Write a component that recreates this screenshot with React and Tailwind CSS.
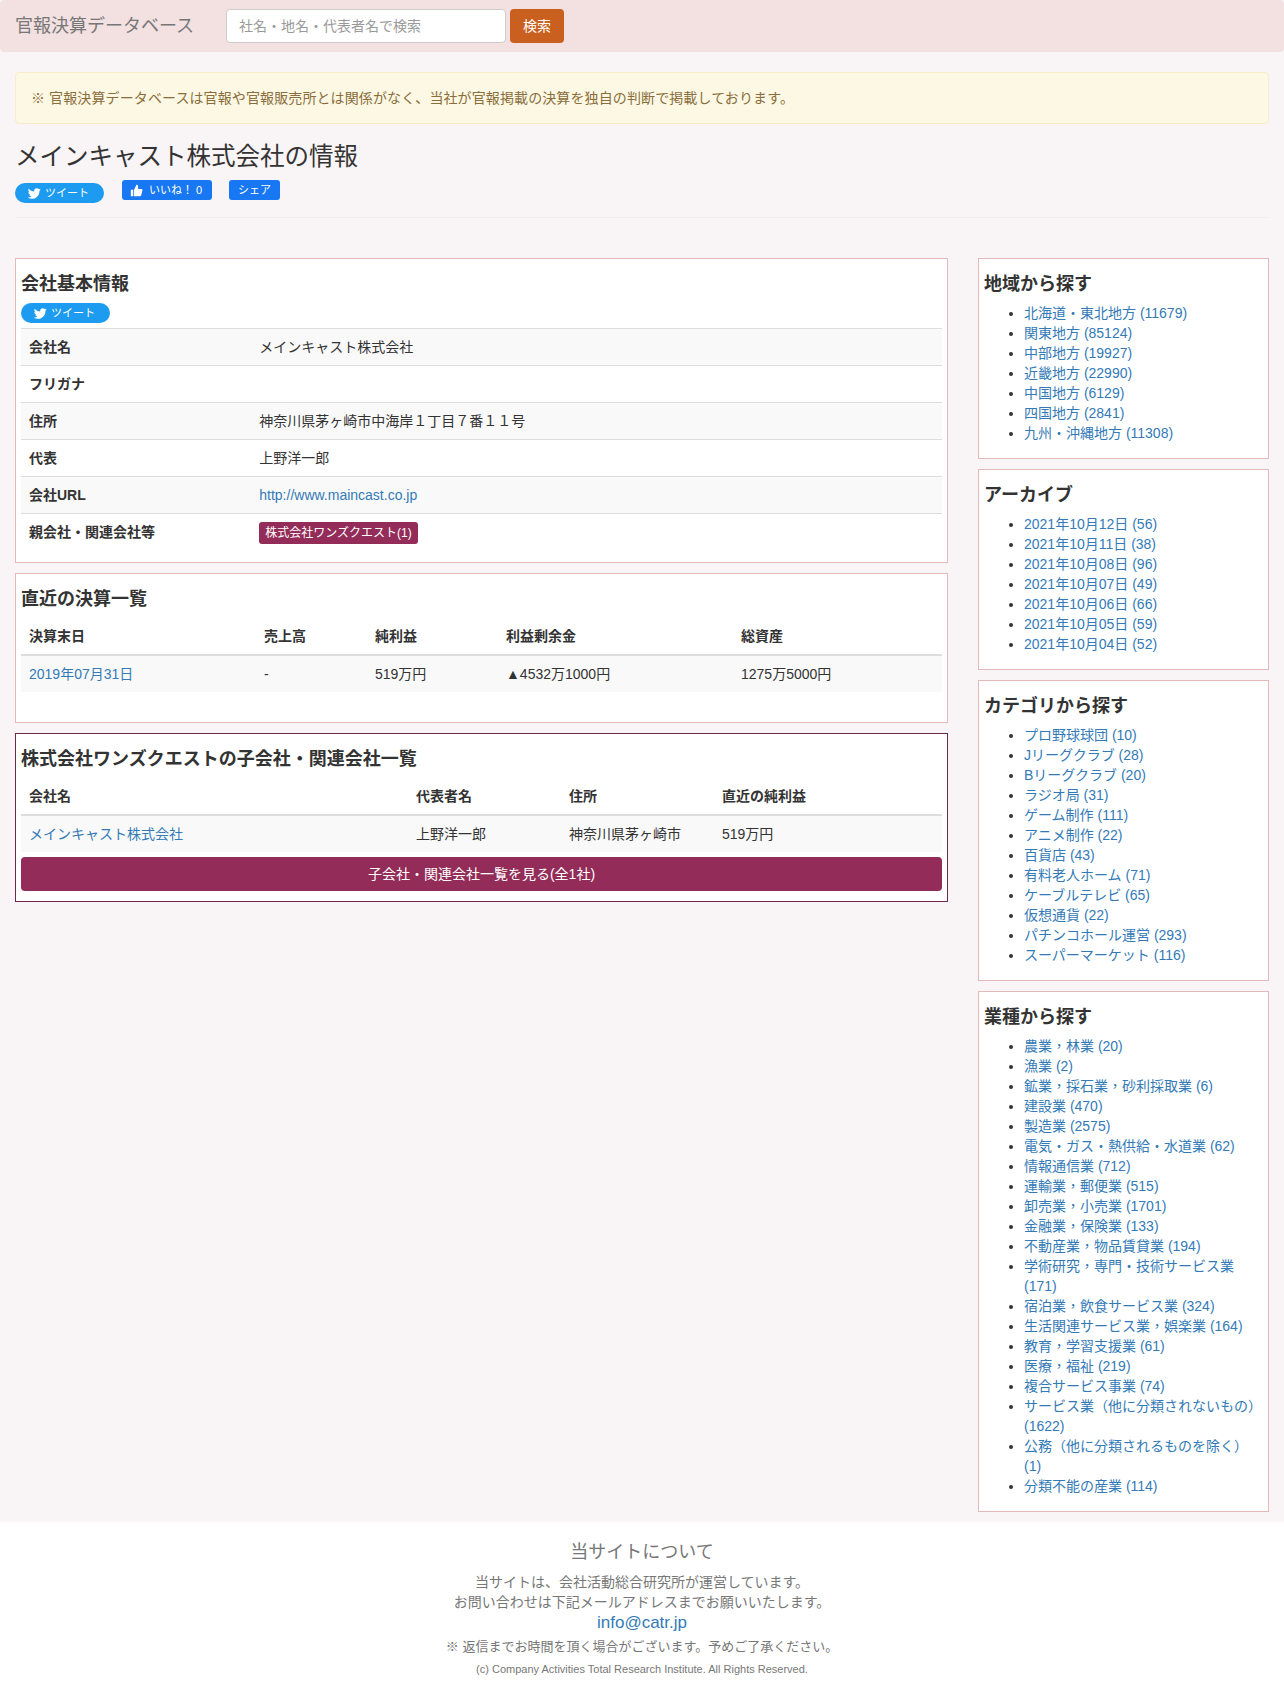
import React from "react";

const Tw = ({ className = "" }) => (
  <a className={`flex items-center h-5 w-[89px] rounded-[10px] bg-[#1d9bf0] text-white text-[11px] leading-5 pl-[13px] ${className}`}>
    <svg viewBox="0 0 24 24" className="w-[13px] h-[13px] mr-[4px] fill-white"><path d="M23.6 4.6c-.9.4-1.8.7-2.8.8 1-.6 1.8-1.6 2.1-2.7-.9.6-2 1-3.1 1.2C18.9 2.9 17.6 2.3 16.2 2.3c-2.7 0-4.9 2.2-4.9 4.9 0 .4 0 .8.1 1.1C7.3 8.1 3.7 6.1 1.3 3.1.9 3.8.6 4.7.6 5.6c0 1.7.9 3.2 2.2 4.1-.8 0-1.6-.2-2.2-.6v.1c0 2.4 1.7 4.4 3.9 4.8-.4.1-.8.2-1.3.2-.3 0-.6 0-.9-.1.6 2 2.4 3.4 4.6 3.4-1.7 1.3-3.8 2.1-6.1 2.1-.4 0-.8 0-1.2-.1 2.2 1.4 4.8 2.2 7.5 2.2 9.1 0 14-7.5 14-14v-.6c1-.7 1.8-1.6 2.5-2.5z" /></svg>
    ツイート
  </a>
);

const Heading = ({ children }) => (
  <h4 className="text-[18px] leading-[20px] font-bold text-[#333] mt-[10px] mb-[9px]">{children}</h4>
);

const Panel = ({ title, border = "border-[#e4b9b9]", children }) => (
  <div className={`border ${border} bg-white p-[5px] mb-[10px]`}>
    <Heading>{title}</Heading>
    {children}
  </div>
);

// The full-width comma sits centred in the reference, as in the TC face.
const Label = ({ text }) =>
  text.split("，").map((part, i) => (
    <React.Fragment key={i}>
      {i > 0 && <span className="leading-[0px] font-['Noto_Sans_CJK_TC',sans-serif]">，</span>}
      {part}
    </React.Fragment>
  ));

const Side = ({ title, items }) => (
  <div className="border border-[#e4b9b9] bg-white p-[5px] mb-[10px]">
    <Heading>{title}</Heading>
    <ul className="list-disc pl-[40px] mb-[10px] text-[#333]">
      {items.map((t) => (
        <li key={t}><a className="text-[#337ab7]"><Label text={t} /></a></li>
      ))}
    </ul>
  </div>
);

const info = [
  ["会社名", "メインキャスト株式会社"],
  ["フリガナ", ""],
  ["住所", "神奈川県茅ヶ崎市中海岸１丁目７番１１号"],
  ["代表", "上野洋一郎"],
  ["会社URL", <a className="text-[#337ab7]">http://www.maincast.co.jp</a>],
  ["親会社・関連会社等", <span className="block w-fit bg-[#932c58] text-white text-[12px] leading-[18px] px-[6px] py-[2px] rounded-[3px]">株式会社ワンズクエスト(1)</span>],
];

const region = ["北海道・東北地方 (11679)", "関東地方 (85124)", "中部地方 (19927)", "近畿地方 (22990)", "中国地方 (6129)", "四国地方 (2841)", "九州・沖縄地方 (11308)"];
const archive = ["2021年10月12日 (56)", "2021年10月11日 (38)", "2021年10月08日 (96)", "2021年10月07日 (49)", "2021年10月06日 (66)", "2021年10月05日 (59)", "2021年10月04日 (52)"];
const cats = ["プロ野球球団 (10)", "Jリーグクラブ (28)", "Bリーグクラブ (20)", "ラジオ局 (31)", "ゲーム制作 (111)", "アニメ制作 (22)", "百貨店 (43)", "有料老人ホーム (71)", "ケーブルテレビ (65)", "仮想通貨 (22)", "パチンコホール運営 (293)", "スーパーマーケット (116)"];
const inds = ["農業，林業 (20)", "漁業 (2)", "鉱業，採石業，砂利採取業 (6)", "建設業 (470)", "製造業 (2575)", "電気・ガス・熱供給・水道業 (62)", "情報通信業 (712)", "運輸業，郵便業 (515)", "卸売業，小売業 (1701)", "金融業，保険業 (133)", "不動産業，物品賃貸業 (194)", "学術研究，専門・技術サービス業 (171)", "宿泊業，飲食サービス業 (324)", "生活関連サービス業，娯楽業 (164)", "教育，学習支援業 (61)", "医療，福祉 (219)", "複合サービス事業 (74)", "サービス業（他に分類されないもの） (1622)", "公務（他に分類されるものを除く） (1)", "分類不能の産業 (114)"];

export default function App() {
  return (
    <div className="bg-[#f9f4f5] text-[14px] leading-[20px] text-[#333] font-['Liberation_Sans','Noto_Sans_CJK_JP',sans-serif]">
      <nav className="h-[52px] bg-[#f3e0e0] border border-[#f2e2e2] rounded-[4px] flex items-center mb-5">
        <span className="text-[18px] text-[#777] ml-[14px] w-[211px] shrink-0">官報決算データベース</span>
        <div className="w-[280px] h-[34px] bg-white border border-[#ccc] rounded-[4px] px-3 text-[#999] leading-[32px]">社名・地名・代表者名で検索</div>
        <button className="ml-[4px] h-[34px] w-[54px] bg-[#c9601f] text-white rounded-[4px]">検索</button>
      </nav>
      <div className="px-[15px]">
        <div className="h-[52px] bg-[#fcf8e3] border border-[#faebcc] rounded-[4px] p-[15px] text-[#8a6d3b] tracking-[0.11px]">※ 官報決算データベースは官報や官報販売所とは関係がなく、当社が官報掲載の決算を独自の判断で掲載しております。</div>
        <div className="border-b border-[#eee] mt-[20px] pb-[14px] mb-[40px]">
          <h1 className="text-[24.5px] leading-[26px] text-[#333] mb-[10px]">メインキャスト株式会社の情報</h1>
          <div className="flex items-start">
            <Tw className="mt-[3px]" />
            <a className="flex items-center h-5 w-[90px] ml-[18px] rounded-[3px] bg-[#1877f2] text-white text-[11px] pl-[8px]">
              <svg viewBox="0 0 16 16" className="w-[13px] h-[13px] mr-[6px] fill-white"><path d="M1 7h3v8H1zM5 7l3-6c1.3 0 2 .8 2 2v3h4c1 0 1.6.8 1.3 1.8l-1.5 6c-.2.8-.8 1.2-1.6 1.2H5z" /></svg>
              いいね！ 0
            </a>
            <a className="flex items-center justify-center h-5 w-[51px] ml-[17px] rounded-[3px] bg-[#1877f2] text-white text-[11px]">シェア</a>
          </div>
        </div>
      </div>
      <div className="flex">
        <div className="w-[963px] px-[15px]">
          <Panel title="会社基本情報">
            <Tw />
            <table className="w-full mt-[5px] mb-[5px] border-collapse">
              <tbody>
                {info.map(([k, v], i) => (
                  <tr key={i} className={i % 2 === 0 ? "bg-[#f9f9f9]" : ""}>
                    <th className="w-[25%] text-left font-bold p-2 border-t border-[#ddd] align-top">{k}</th>
                    <td className="p-2 border-t border-[#ddd] align-top">{v}</td>
                  </tr>
                ))}
              </tbody>
            </table>
          </Panel>
          <Panel title="直近の決算一覧">
            <table className="w-full mb-[25px] border-collapse table-fixed">
              <thead>
                <tr>
                  <th className="w-[235px] text-left p-2 border-b-2 border-[#ddd]">決算末日</th>
                  <th className="w-[111px] text-left p-2 border-b-2 border-[#ddd]">売上高</th>
                  <th className="w-[131px] text-left p-2 border-b-2 border-[#ddd]">純利益</th>
                  <th className="w-[235px] text-left p-2 border-b-2 border-[#ddd]">利益剰余金</th>
                  <th className="text-left p-2 border-b-2 border-[#ddd]">総資産</th>
                </tr>
              </thead>
              <tbody>
                <tr className="bg-[#f9f9f9]">
                  <td className="p-2"><a className="text-[#337ab7]">2019年07月31日</a></td>
                  <td className="p-2">-</td>
                  <td className="p-2">519万円</td>
                  <td className="p-2">▲4532万1000円</td>
                  <td className="p-2">1275万5000円</td>
                </tr>
              </tbody>
            </table>
          </Panel>
          <Panel title="株式会社ワンズクエストの子会社・関連会社一覧" border="border-[#70284a]">
            <table className="w-full border-collapse table-fixed">
              <thead>
                <tr>
                  <th className="w-[387px] text-left p-2 border-b-2 border-[#ddd]">会社名</th>
                  <th className="w-[153px] text-left p-2 border-b-2 border-[#ddd]">代表者名</th>
                  <th className="w-[153px] text-left p-2 border-b-2 border-[#ddd]">住所</th>
                  <th className="text-left p-2 border-b-2 border-[#ddd]">直近の純利益</th>
                </tr>
              </thead>
              <tbody>
                <tr className="bg-[#f9f9f9]">
                  <td className="p-2"><a className="text-[#337ab7]">メインキャスト株式会社</a></td>
                  <td className="p-2">上野洋一郎</td>
                  <td className="p-2">神奈川県茅ヶ崎市</td>
                  <td className="p-2">519万円</td>
                </tr>
              </tbody>
            </table>
            <a className="block mt-[5px] mb-[5px] h-[34px] leading-[34px] text-center bg-[#932c58] text-white rounded-[4px]">子会社・関連会社一覧を見る(全1社)</a>
          </Panel>
        </div>
        <div className="w-[321px] px-[15px]">
          <Side title="地域から探す" items={region} />
          <Side title="アーカイブ" items={archive} />
          <Side title="カテゴリから探す" items={cats} />
          <Side title="業種から探す" items={inds} />
        </div>
      </div>
      <footer className="bg-white text-center text-[#777] pt-[20px] pb-[9px]">
        <h4 className="text-[18px] leading-[20px] mb-[10px]">当サイトについて</h4>
        <p>当サイトは、会社活動総合研究所が運営しています。</p>
        <p>お問い合わせは下記メールアドレスまでお願いいたします。</p>
        <p className="text-[17px] leading-[22px]"><a className="text-[#337ab7]">info@catr.jp</a></p>
        <p className="text-[13px] mt-[3px]">※ 返信までお時間を頂く場合がございます。予めご了承ください。</p>
        <p className="text-[11px] mt-[2px]">(c) Company Activities Total Research Institute. All Rights Reserved.</p>
      </footer>
    </div>
  );
}
